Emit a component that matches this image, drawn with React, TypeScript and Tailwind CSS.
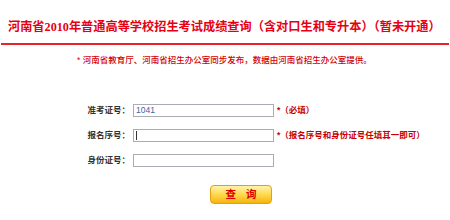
export default function App() {
  return (
    <div
      className="relative h-[220px] w-[450px] overflow-hidden bg-white"
      style={{ fontFamily: '"Liberation Sans", "Noto Sans CJK SC", sans-serif' }}
    >
      <div className="px-[8px] pt-[19px]">
        <h1
          className="whitespace-nowrap text-[12.2px] font-bold leading-[16px] text-[#e60012]"
          style={{ fontFamily: '"Liberation Serif", "Noto Sans CJK SC", serif' }}
        >
          河南省2010年普通高等学校招生考试成绩查询（含对口生和专升本）（暂未开通）
        </h1>
      </div>
      <div className="mx-[1px] mt-[8px] h-[2px] bg-[#e8242b]" />
      <p className="mt-[9px] pl-[77px] whitespace-nowrap text-[8.5px] font-medium leading-[12px] text-[#d40000]">
        * 河南省教育厅、河南省招生办公室同步发布，数据由河南省招生办公室提供。
      </p>

      <div className="mt-[38px] flex flex-col gap-[12px]">
        <Row label="准考证号：" value="1041" note="*（必填）" />
        <Row label="报名序号：" note="*（报名序号和身份证号任填其一即可）" cursor />
        <Row label="身份证号：" />
      </div>

      <div className="mt-[18px] flex pl-[210px]">
        <button className="flex h-[19px] w-[62px] items-center justify-center gap-[10px] rounded-[4px] border border-[#e3a10f] bg-gradient-to-b from-[#fff2a8] via-[#ffd94a] to-[#f5b400] text-[10.5px] font-bold leading-none text-[#e00000]">
          <span>查</span>
          <span>询</span>
        </button>
      </div>
    </div>
  );
}

function Row({ label, value, note, cursor }: { label: string; value?: string; note?: string; cursor?: boolean }) {
  return (
    <div className="flex h-[13px] items-center">
      <span className="w-[131px] shrink-0 pr-[1px] text-right text-[8.5px] font-bold text-[#333]">{label}</span>
      <div className="relative ml-[2px] flex h-[13px] w-[141px] shrink-0 items-center border border-[#a9adb3] bg-white px-[2px]">
        {value && <span className="text-[8.5px] leading-none text-[#3f5fa8]">{value}</span>}
        {cursor && <span className="h-[9px] w-[1px] bg-[#333]" />}
      </div>
      {note && (
        <span className="ml-[3px] whitespace-nowrap text-[8.5px] font-bold text-[#c80000]">{note}</span>
      )}
    </div>
  );
}
